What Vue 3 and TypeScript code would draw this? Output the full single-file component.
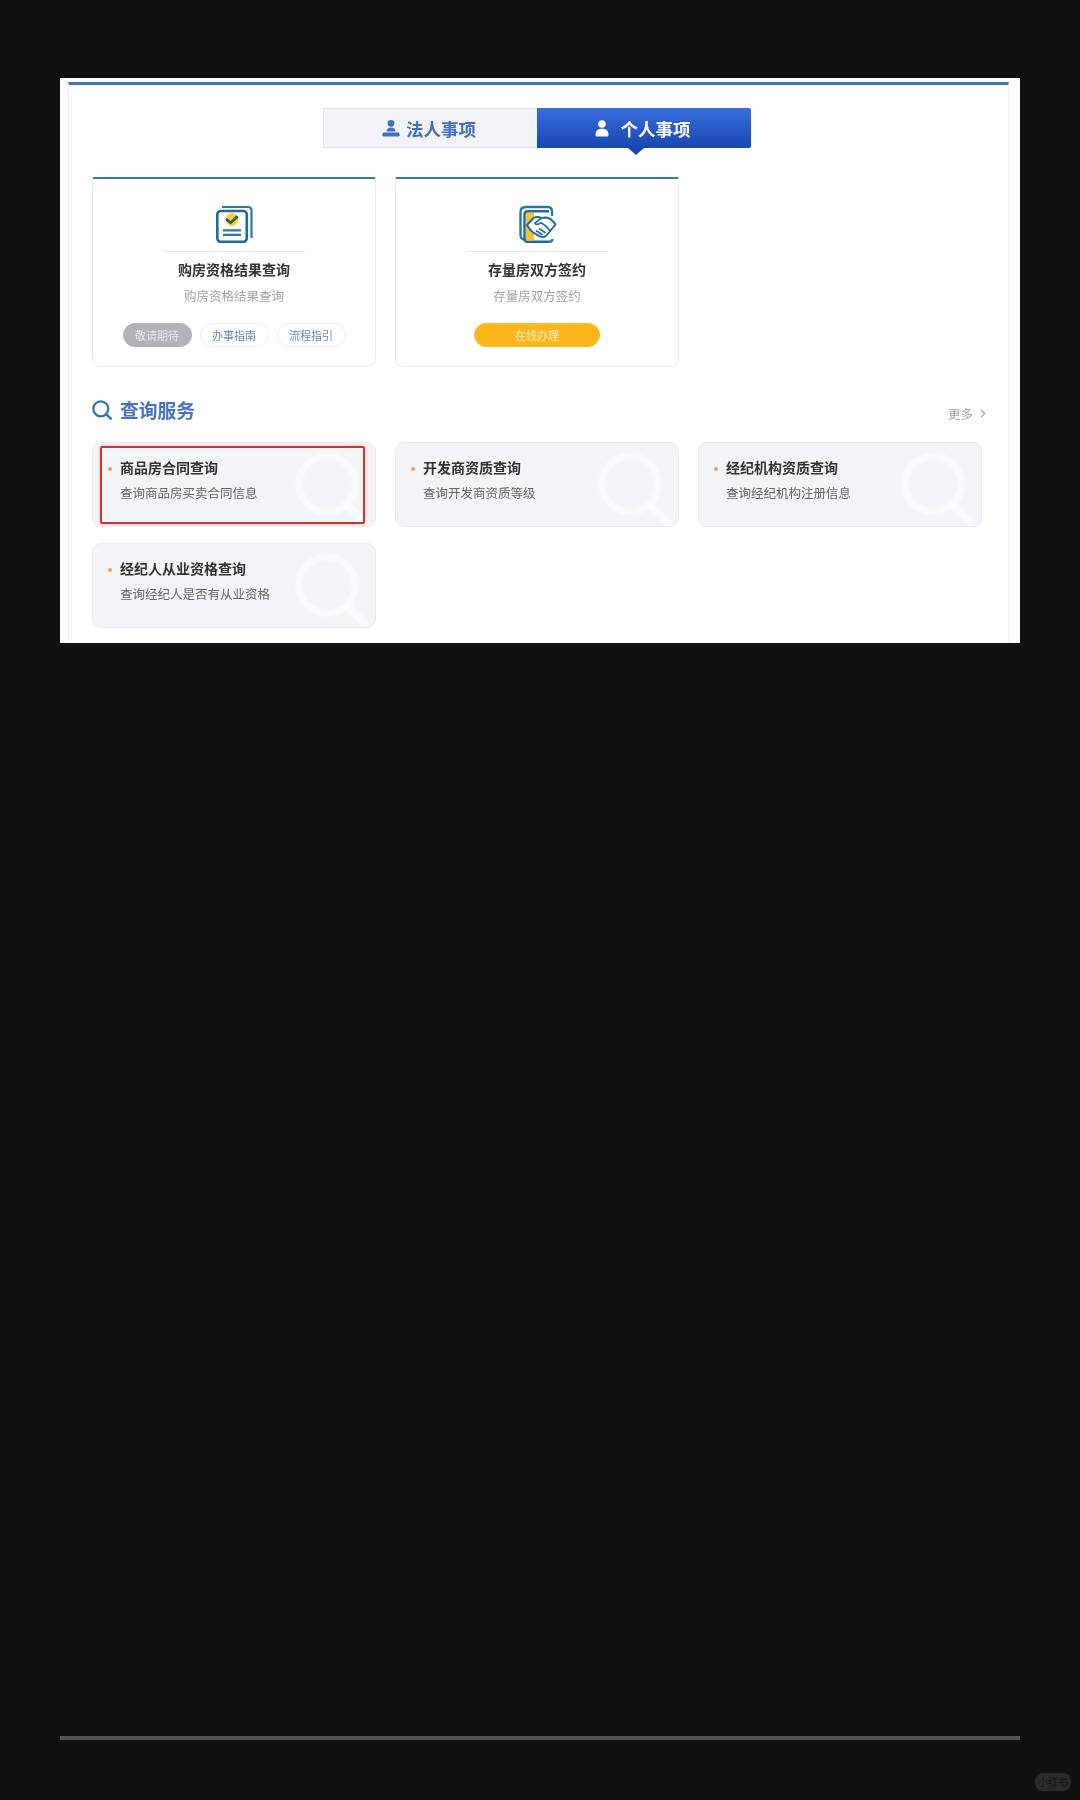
<script setup lang="ts">
interface QueryItem {
  title: string;
  desc: string;
}

const queryItems: QueryItem[] = [
  { title: "商品房合同查询", desc: "查询商品房买卖合同信息" },
  { title: "开发商资质查询", desc: "查询开发商资质等级" },
  { title: "经纪机构资质查询", desc: "查询经纪机构注册信息" },
  { title: "经纪人从业资格查询", desc: "查询经纪人是否有从业资格" },
];
</script>

<template>
  <div class="page">
    <div class="sheet">
      <div class="inner">
        <div class="tabs">
          <div class="tab">
            <svg class="tab-icon" width="18" height="18" viewBox="0 0 18 18">
              <circle cx="9" cy="4.300" r="3.400" fill="#3f6fc6" />
              <path d="M4.500 12.600c0-2.800 2-4.200 4.500-4.200s4.500 1.400 4.500 4.200z" fill="#3f6fc6" />
              <path d="M1.200 13.400h15.600l.9 2.400c.2.900-.4 1.600-1.300 1.600H1.600c-.9 0-1.500-.7-1.300-1.600z" fill="#3f6fc6" />
            </svg>
            <span>法人事项</span>
          </div>
          <div class="tab active">
            <svg class="tab-icon" width="14" height="17" viewBox="0 0 14 17">
              <circle cx="7" cy="4" r="3.800" fill="#fff" />
              <path d="M.5 15c0-4 2-6.200 6.500-6.200s6.500 2.200 6.500 6.200c0 1.100-.6 1.600-1.500 1.600H2C1.100 16.600.5 16.100.5 15z" fill="#fff" />
            </svg>
            <span>个人事项</span>
          </div>
        </div>

        <div class="grid top-grid">
          <div class="biz-card">
            <svg class="biz-icon" width="38" height="38" viewBox="0 0 38 38" fill="none">
              <path d="M6 2h26c2 0 3.500 1.500 3.500 3.500V33" stroke="#2c76a4" stroke-width="2.200" />
              <rect x="1.300" y="6" width="29.500" height="30.800" rx="3.500" stroke="#20699b" stroke-width="2.600" fill="#fff" />
              <circle cx="16" cy="14.500" r="6.400" fill="#f6cf3a" />
              <path d="M10 14l4.600 3.800 7-6.600" stroke="#2d5f63" stroke-width="2.600" />
              <path d="M7 25.300h18M7 29.800h18" stroke="#2c76a4" stroke-width="2.200" />
            </svg>
            <div class="biz-line"></div>
            <div class="biz-title">购房资格结果查询</div>
            <div class="biz-desc">购房资格结果查询</div>
            <div class="biz-actions">
              <span class="pill muted">敬请期待</span>
              <span class="pill">办事指南</span>
              <span class="pill">流程指引</span>
            </div>
          </div>
          <div class="biz-card">
            <svg class="biz-icon" width="38" height="38" viewBox="0 0 38 38" fill="none">
              <path d="M29 2H7C3.500 2 1.500 4 1.500 7v23c0 2.500 1.500 4.500 4 4.500" stroke="#2c76a4" stroke-width="2.400" />
              <path d="M30 6.200H8.500C6.500 6.200 5.500 7.500 5.500 9.500v24c0 2 1 3.300 3 3.300H30" fill="#fff" stroke="#20699b" stroke-width="2.400" />
              <rect x="7" y="8" width="8" height="27.500" fill="#f2c62f" />
              <path d="M29 2c3 0 4 1.500 4 5v4M30 36.800c2.500 0 3.500-1 3.500-2.800" stroke="#2c76a4" stroke-width="2.400" />
              <path d="M8 20l6.500-7c3-1.500 6-1 8 0l4-.5c3.500 0 7 2.500 10 7l-9 11c-2.500 2-5 2-7 .5l-6.500-3.500C11.500 25.500 9.500 23 8 20z" fill="#fff" stroke="#20699b" stroke-width="1.900" stroke-linejoin="round" />
              <path d="M22.500 13l-6.500 5.200c1.500 2 3.500 1.500 6-.5 3 1.500 6.500 4.500 8.500 7.300M20 31c-2-1-3.500-2-5-3M23 29.500c-1.500-1-3.500-2.500-5.500-3.500M26 27.500c-1.500-1-3.500-2.500-5.500-3.500" stroke="#20699b" stroke-width="1.700" stroke-linecap="round" />
            </svg>
            <div class="biz-line"></div>
            <div class="biz-title">存量房双方签约</div>
            <div class="biz-desc">存量房双方签约</div>
            <div class="biz-actions">
              <span class="pill primary">在线办理</span>
            </div>
          </div>
        </div>

        <div class="section-head">
          <div class="section-title">
            <svg width="20" height="20" viewBox="0 0 20 20" fill="none">
              <circle cx="8.800" cy="8.800" r="7.500" stroke="#2a78a8" stroke-width="2.200" />
              <path d="M14.500 14.500l4.200 4.200" stroke="#2a78a8" stroke-width="2.400" stroke-linecap="round" />
            </svg>
            <span>查询服务</span>
          </div>
          <div class="more">
            <span>更多</span>
            <svg width="6" height="9" viewBox="0 0 6 9" fill="none">
              <path d="M1 .8l3.700 3.700L1 8.200" stroke="#999" stroke-width="1.100" />
            </svg>
          </div>
        </div>

        <div class="grid query-grid">
          <div v-for="item in queryItems" :key="item.title" class="query-card">
            <svg class="query-bg" width="78" height="78" viewBox="0 0 78 78" fill="none">
              <circle cx="35" cy="32" r="28" stroke="#fff" stroke-opacity=".55" stroke-width="7" />
              <path d="M55 53l20 20" stroke="#fff" stroke-opacity=".55" stroke-width="8" />
            </svg>
            <div class="query-title">{{ item.title }}</div>
            <div class="query-desc">{{ item.desc }}</div>
          </div>
          <div class="highlight"></div>
        </div>
      </div>
    </div>
    <div class="bottom-bar"></div>
    <div class="badge">小红书</div>
  </div>
</template>

<style>
html,
body {
  margin: 0;
  background: #111111;
}
</style>

<style scoped>
.page {
  position: relative;
  height: 1800px;
  padding: 78px 60px 0;
  box-sizing: border-box;
  background: #111111;
  overflow: hidden;
  font-family: "Noto Sans CJK SC", "Noto Sans", sans-serif;
}

.sheet {
  height: 565px;
  padding: 4px 11px 0 8px;
  box-sizing: border-box;
  background: #fff;
  filter: blur(0.5px);
}

.inner {
  height: 561px;
  padding: 0 22px 0 23px;
  box-sizing: border-box;
  border-top: 3px solid #3f74bd;
  border-left: 1px solid #edf0f5;
  border-right: 1px solid #edf0f5;
}

/* Tabs */
.tabs {
  display: flex;
  width: 428px;
  height: 40px;
  margin: 23px 0 0 231px;
}

.tab {
  width: 214px;
  box-sizing: border-box;
  display: flex;
  align-items: center;
  justify-content: center;
  gap: 6px;
  padding-right: 3px;
  background: #f1f3f9;
  border: 1px solid #dee2ea;
  border-right: 0;
  border-radius: 2px 0 0 2px;
  color: #3f6fc6;
  font-size: 17.500px;
  font-weight: 700;
}

.tab.active {
  position: relative;
  background: linear-gradient(#3a6ddd, #1747b0);
  border: 0;
  border-radius: 0 2px 2px 0;
  color: #fff;
  gap: 12px;
}

.tab.active::after {
  content: "";
  position: absolute;
  left: 99px;
  bottom: -7px;
  margin-left: -8px;
  border-top: 7px solid #1747b0;
  border-left: 8px solid transparent;
  border-right: 8px solid transparent;
}

.grid {
  display: grid;
  grid-template-columns: repeat(3, 284px);
  column-gap: 19px;
}

/* Business cards */
.top-grid {
  margin-top: 29px;
}

.biz-card {
  display: flex;
  flex-direction: column;
  align-items: center;
  height: 190px;
  padding-top: 26px;
  box-sizing: border-box;
  border: 1px solid #e8eaef;
  border-top: 2px solid #3f74a8;
  border-radius: 2px 2px 8px 8px;
}

.biz-icon {
  display: block;
  margin-left: 2px;
}

.biz-line {
  width: 142px;
  height: 1px;
  margin-top: 8px;
  background: #e8e9ec;
}

.biz-title {
  margin-top: 7px;
  color: #333;
  font-size: 14px;
  font-weight: 700;
  line-height: 20px;
}

.biz-desc {
  margin-top: 8px;
  color: #a3a3a3;
  font-size: 12.500px;
  line-height: 18px;
}

.biz-actions {
  display: flex;
  gap: 8px;
  margin-top: 18px;
}

.pill {
  width: 69px;
  height: 24px;
  box-sizing: border-box;
  border: 1px solid #eceef3;
  border-radius: 12px;
  color: #5f86bd;
  font-size: 11px;
  line-height: 22px;
  text-align: center;
}

.pill.muted {
  background: #b0b3b8;
  border-color: #b0b3b8;
  color: #e8e9eb;
}

.pill.primary {
  width: 126px;
  background: #fdb71c;
  border-color: #fdb71c;
  color: #fdeec6;
}

/* Section head */
.section-head {
  display: flex;
  align-items: center;
  justify-content: space-between;
  margin-top: 29px;
}

.section-title {
  display: flex;
  align-items: center;
  gap: 8px;
  color: #4472c4;
  font-size: 18.800px;
  font-weight: 700;
  line-height: 28px;
}

.more {
  display: flex;
  align-items: center;
  gap: 7px;
  margin-top: 6px;
  color: #a0a0a0;
  font-size: 12.500px;
}

/* Query cards */
.query-grid {
  position: relative;
  row-gap: 16px;
  margin-top: 18px;
}

.query-card {
  position: relative;
  height: 85px;
  padding: 13px 0 0 27px;
  box-sizing: border-box;
  background: #f2f4f8;
  border: 1px solid #e8eaf0;
  border-radius: 9px;
  overflow: hidden;
}

.query-card::before {
  content: "";
  position: absolute;
  left: 15px;
  top: 24px;
  width: 4px;
  height: 4px;
  border-radius: 50%;
  background: #ef9a55;
}

.query-bg {
  position: absolute;
  right: 5px;
  top: 9px;
  filter: blur(1px);
}

.query-title {
  position: relative;
  color: #333;
  font-size: 14px;
  font-weight: 700;
  line-height: 22px;
}

.query-desc {
  position: relative;
  margin-top: 6px;
  color: #666;
  font-size: 12.500px;
  line-height: 18px;
}

.highlight {
  position: absolute;
  left: 8px;
  top: 4px;
  width: 265px;
  height: 78px;
  box-sizing: border-box;
  border: 2.500px solid #d5302f;
  border-radius: 2px;
  box-shadow: 0 0 3px rgba(213, 48, 47, 0.35);
}

.bottom-bar {
  height: 4px;
  margin-top: 1093px;
  background: #555;
}

.badge {
  position: absolute;
  left: 1035px;
  top: 1773px;
  width: 36px;
  height: 18px;
  border-radius: 8px;
  background: #2b2b2b;
  color: #151515;
  font-size: 10px;
  line-height: 18px;
  text-align: center;
}
</style>
